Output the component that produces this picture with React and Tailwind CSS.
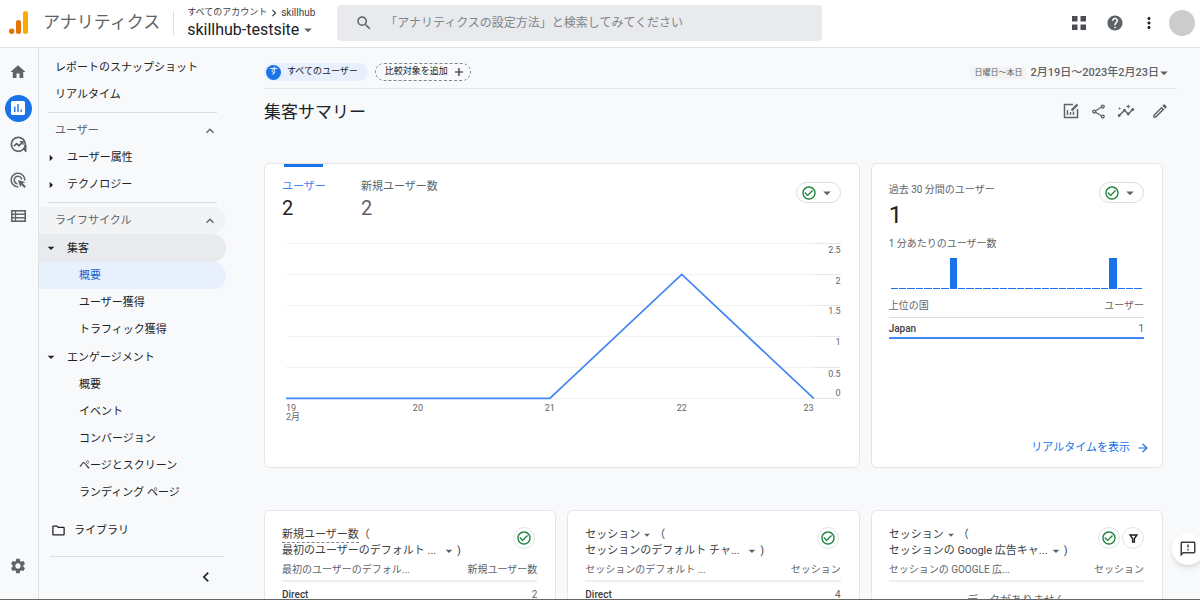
import React from "react";
import {
  MdAdd,
  MdAdsClick,
  MdArrowDropDown,
  MdArrowForward,
  MdArrowRight,
  MdCheckCircleOutline,
  MdChevronLeft,
  MdChevronRight,
  MdExpandLess,
  MdHelp,
  MdHome,
  MdInsights,
  MdMoreVert,
  MdOutlineEdit,
  MdOutlineFeedback,
  MdOutlineFolder,
  MdOutlineShare,
  MdSearch,
  MdSettings,
} from "react-icons/md";

const lifecycle = [
  { label: "集客", open: true, active: true },
  { label: "概要", child: true, selected: true },
  { label: "ユーザー獲得", child: true },
  { label: "トラフィック獲得", child: true },
  { label: "エンゲージメント", open: true },
  { label: "概要", child: true },
  { label: "イベント", child: true },
  { label: "コンバージョン", child: true },
  { label: "ページとスクリーン", child: true },
  { label: "ランディング ページ", child: true },
];

const chartDays = [
  { label: "19", x: 4, y: 163 },
  { label: "20", x: 136, y: 163 },
  { label: "21", x: 268, y: 163 },
  { label: "22", x: 400, y: 39 },
  { label: "23", x: 532, y: 163 },
];

const chartScale = [
  { label: "2.5", line: 8, text: 19 },
  { label: "2", line: 39, text: 50 },
  { label: "1.5", line: 70, text: 80 },
  { label: "1", line: 101, text: 111 },
  { label: "0.5", line: 132, text: 143 },
  { label: "0", line: 163, text: 162 },
];

// users per minute, last 30 minutes
const minutes = Array.from({ length: 30 }, (_, i) => (i === 7 || i === 26 ? 1 : 0));

function AnalyticsLogo() {
  return (
    <svg width="20" height="23" viewBox="0 0 20 23" aria-hidden="true">
      <rect x="14" y="0" width="5" height="23" rx="2.5" fill="#f9ab00" />
      <rect x="7" y="9" width="5" height="14" rx="2.5" fill="#e37400" />
      <circle cx="2.7" cy="20.2" r="2.7" fill="#e37400" />
    </svg>
  );
}

function ReportsIcon() {
  return (
    <svg width="16" height="16" viewBox="0 0 16 16" aria-hidden="true">
      <rect x="1" y="1" width="14" height="14" rx="1.5" fill="#fff" />
      <path d="M4.8 6.5V12M8 4V12M11.2 9.5V12" stroke="#1a73e8" strokeWidth="1.4" />
    </svg>
  );
}

function ExploreIcon() {
  return (
    <svg width="17" height="17" viewBox="0 0 17 17" fill="none" stroke="#5f6368" aria-hidden="true">
      <path d="M13.5 13.5L16 16V9Z" fill="#5f6368" strokeWidth="1" />
      <circle cx="8.3" cy="8.3" r="7" strokeWidth="1.7" />
      <path d="M3.8 10.2L6.7 7.6L9 9.7L12.6 6" strokeWidth="1.7" />
      <path d="M9.8 5.6H13V8.8" strokeWidth="1.4" />
    </svg>
  );
}

function LibraryIcon() {
  return (
    <svg width="15" height="12" viewBox="0 0 15 12" fill="none" stroke="#5f6368" aria-hidden="true">
      <rect x="0.8" y="0.8" width="13.4" height="10.4" strokeWidth="1.6" />
      <path d="M1 4.2H14M1 7.8H14M4.5 1V11" strokeWidth="1.4" />
    </svg>
  );
}

function AppsIcon() {
  return (
    <svg width="14" height="14" viewBox="0 0 14 14" fill="#4a4d51" aria-hidden="true">
      <path d="M0 0H5.5V5.5H0ZM8.5 0H14V5.5H8.5ZM0 8.5H5.5V14H0ZM8.5 8.5H14V14H8.5Z" />
    </svg>
  );
}

function ChartEditIcon() {
  return (
    <svg width="16" height="16" viewBox="0 0 16 16" fill="none" stroke="#5f6368" aria-hidden="true">
      <path d="M10 1.5H1.5V14.5H14.5V6" strokeWidth="1.5" />
      <path d="M4.5 7V12M7.5 9V12M10.5 8.5V12" strokeWidth="1.4" />
      <path d="M8.5 7.5L14.5 1.5" strokeWidth="2.4" />
    </svg>
  );
}

function FilterIcon() {
  return (
    <svg width="9" height="9" viewBox="0 0 9 9" fill="none" stroke="#202124" aria-hidden="true">
      <path d="M1 1H8L5.4 4.6V8H3.6V4.6Z" strokeWidth="1.4" />
    </svg>
  );
}

function Header() {
  return (
    <header className="flex h-12 shrink-0 items-center border-b border-[#dfe1e5] bg-white pr-[5px] pb-0.5 pl-[9px]">
      <AnalyticsLogo />
      <span className="ml-[14px] text-[17px] whitespace-nowrap text-[#5f6368]">アナリティクス</span>
      <div className="ml-[13px] h-6 w-px shrink-0 bg-[#e0e0e0]" />
      <button className="ml-[13px] flex w-[150px] shrink-0 flex-col text-left whitespace-nowrap">
        <span className="flex h-[14px] items-center text-[9px] text-[#3c4043]">
          すべてのアカウント
          <MdChevronRight className="size-[14px]" />
          <span className="text-[10px]">skillhub</span>
        </span>
        <span className="flex h-5 items-center text-base text-[#202124]">
          skillhub-testsite
          <MdArrowDropDown className="size-[18px] text-[#5f6368]" />
        </span>
      </button>
      <label className="flex h-9 w-[485px] items-center rounded bg-[#e8eaed] pl-[18px]">
        <MdSearch className="size-[18px] shrink-0 text-[#5f6368]" />
        <input
          type="search"
          aria-label="検索"
          placeholder="「アナリティクスの設定方法」と検索してみてください"
          className="ml-3 min-w-0 flex-1 bg-transparent text-xs outline-none placeholder:text-[#80868b]"
        />
      </label>
      <div className="ml-auto flex items-center">
        <button aria-label="アプリ" className="flex w-9 justify-center">
          <AppsIcon />
        </button>
        <button aria-label="ヘルプ" className="flex w-9 justify-center text-[#5f6368]">
          <MdHelp className="size-[18px]" />
        </button>
        <button aria-label="その他" className="flex w-8 justify-center text-[#202124]">
          <MdMoreVert className="size-[18px]" />
        </button>
        <button aria-label="アカウント" className="ml-1 size-[26px] rounded-full bg-[#cccccc]" />
      </div>
    </header>
  );
}

function Rail() {
  return (
    <nav className="flex w-[39px] shrink-0 flex-col items-center border-r border-[#dfe1e5] pt-1.5 pr-0.5 pb-[15px] text-[#5f6368]">
      <a href="#home" aria-label="ホーム" className="flex h-9 items-center">
        <MdHome className="size-[18px]" />
      </a>
      <a href="#reports" aria-label="レポート" className="flex h-9 items-center">
        <span className="flex size-[27px] items-center justify-center rounded-full bg-[#1a73e8]">
          <ReportsIcon />
        </span>
      </a>
      <a href="#explore" aria-label="探索" className="flex h-9 items-center">
        <ExploreIcon />
      </a>
      <a href="#ads" aria-label="広告" className="flex h-9 items-center">
        <MdAdsClick className="size-[18px]" />
      </a>
      <a href="#configure" aria-label="設定" className="flex h-9 items-center">
        <LibraryIcon />
      </a>
      <a href="#admin" aria-label="管理" className="mt-auto flex h-9 items-center">
        <MdSettings className="size-[18px]" />
      </a>
    </nav>
  );
}

function SideItem({ item }) {
  if (item.child) {
    return (
      <a
        href="#report"
        className={
          item.selected
            ? "flex h-[27px] items-center rounded-r-full bg-[#e8f0fe] pt-0.5 pl-10 text-[#1967d2]"
            : "flex h-[27px] items-center pt-0.5 pl-10"
        }
      >
        {item.label}
      </a>
    );
  }
  return (
    <button
      className={
        item.active
          ? "flex h-7 w-full items-center rounded-r-full bg-[#e8eaed] pl-1"
          : item.open
            ? "flex h-7 w-full items-center pl-1"
            : "flex h-[27px] w-full items-center pl-1"
      }
    >
      {item.open ? <MdArrowDropDown className="size-4" /> : <MdArrowRight className="size-4" />}
      <span className="ml-2 pt-0.5">{item.label}</span>
    </button>
  );
}

function Sidebar() {
  return (
    <nav className="w-[187px] shrink-0 pt-1.5 text-[11px] whitespace-nowrap text-[#202124]">
      <a href="#snapshot" className="flex h-[27px] items-center pt-0.5 pl-4">
        レポートのスナップショット
      </a>
      <a href="#realtime" className="flex h-[27px] items-center pt-0.5 pl-4">
        リアルタイム
      </a>
      <hr className="my-1 mr-[9px] ml-[9px] border-[#dadce0]" />
      <button className="flex h-[27px] w-full items-center justify-between pr-2 pl-4 text-[#5f6368]">
        <span className="pt-0.5">ユーザー</span>
        <MdExpandLess className="size-4" />
      </button>
      <SideItem item={{ label: "ユーザー属性" }} />
      <SideItem item={{ label: "テクノロジー" }} />
      <hr className="my-1 mr-[9px] ml-[9px] border-[#dadce0]" />
      <button className="flex h-[27px] w-full items-center justify-between rounded-r-full bg-[#f1f3f4] pr-2 pl-4 text-[#5f6368]">
        <span className="pt-0.5">ライフサイクル</span>
        <MdExpandLess className="size-4" />
      </button>
      {lifecycle.map((item, i) => (
        <SideItem key={i} item={item} />
      ))}
      <a href="#library" className="mt-[11px] flex h-[27px] items-center pl-3">
        <MdOutlineFolder className="size-[15px]" />
        <span className="ml-2 pt-0.5">ライブラリ</span>
      </a>
      <hr className="mt-3 mr-[2px] ml-[11px] border-[#dadce0]" />
      <button aria-label="閉じる" className="mt-2.5 ml-auto flex w-10 justify-center">
        <MdChevronLeft className="size-5" />
      </button>
    </nav>
  );
}

function StatusPill() {
  return (
    <button
      aria-label="データの状態"
      className="flex h-[21px] w-[45px] items-center justify-between rounded-full border border-[#dadce0] pr-1 pl-1"
    >
      <MdCheckCircleOutline className="size-4 text-[#188038]" />
      <MdArrowDropDown className="size-[18px] text-[#5f6368]" />
    </button>
  );
}

function RoundButton({ label, children }) {
  return (
    <button
      aria-label={label}
      className="flex size-[22px] items-center justify-center rounded-full border border-[#e3e5e8]"
    >
      {children}
    </button>
  );
}

function UsersChart() {
  return (
    <svg viewBox="0 0 559 190" className="block w-full text-[9px]" fill="#5f6368" role="img" aria-label="ユーザー">
      {chartScale.map((row) => (
        <g key={row.label}>
          <path d={`M4 ${row.line + 0.5}H559`} stroke="#f0f1f2" />
          <path d={`M532 ${row.line + 0.5}H559`} stroke="#e4e6e8" />
          <text x="559" y={row.text - 1} textAnchor="end">
            {row.label}
          </text>
        </g>
      ))}
      <polyline
        points={chartDays.map((d) => `${d.x},${d.y + 0.5}`).join(" ")}
        fill="none"
        stroke="#4285f4"
        strokeWidth="1.7"
      />
      {chartDays.map((d, i) => (
        <text
          key={d.label}
          x={d.x}
          y="176"
          textAnchor={i === 0 ? "start" : i === chartDays.length - 1 ? "end" : "middle"}
        >
          {d.label}
        </text>
      ))}
      <text x="4" y="185">
        2月
      </text>
    </svg>
  );
}

function UsersCard() {
  return (
    <section className="col-span-2 h-[305px] rounded-md border border-[#e3e5e8] bg-white pr-[18px] pl-[17px]">
      <div className="flex items-start">
        <button className="flex w-[79px] flex-col items-start text-left">
          <span className="ml-0.5 h-[3px] w-[39px] bg-[#1a73e8]" />
          <span className="mt-[11px] text-[11px] leading-[18px] text-[#4285f4]">ユーザー</span>
          <span className="text-xl leading-6 text-[#202124]">2</span>
        </button>
        <button className="flex flex-col items-start pt-[14px] text-left text-[#5f6368]">
          <span className="text-[11px] leading-[18px]">新規ユーザー数</span>
          <span className="text-xl leading-6">2</span>
        </button>
        <div className="mt-[18px] ml-auto">
          <StatusPill />
        </div>
      </div>
      <div className="mt-[15px]">
        <UsersChart />
      </div>
    </section>
  );
}

function RealtimeCard() {
  return (
    <section className="flex h-[305px] flex-col rounded-md border border-[#e3e5e8] bg-white pr-[18px] pl-[17px] text-[10px] text-[#5f6368]">
      <div className="flex items-start justify-between pt-[18px]">
        <div>
          <h2 className="leading-4">過去 30 分間のユーザー</h2>
          <p className="mt-[3px] text-2xl leading-7 text-[#202124]">1</p>
        </div>
        <StatusPill />
      </div>
      <p className="mt-[7px] leading-4">1 分あたりのユーザー数</p>
      <div className="mt-1.5 flex h-[31px] items-end gap-px px-0.5">
        {minutes.map((n, i) => (
          <div key={i} className={n ? "h-[31px] flex-1 bg-[#1a73e8]" : "h-px flex-1 bg-[#1a73e8]"} />
        ))}
      </div>
      <table className="mt-1.5 w-full">
        <thead>
          <tr className="border-b border-[#dadce0]">
            <th className="h-[22px] text-left font-normal">上位の国</th>
            <th className="text-right font-normal">ユーザー</th>
          </tr>
        </thead>
        <tbody>
          <tr className="border-b-2 border-[#4285f4]">
            <td className="h-[21px] pt-0.5 font-medium text-[#3c4043]">Japan</td>
            <td className="pt-0.5 text-right">1</td>
          </tr>
        </tbody>
      </table>
      <a
        href="#realtime"
        className="mt-auto mb-[11px] -mr-1.5 flex items-center justify-end text-[11px] leading-4 text-[#1a73e8]"
      >
        リアルタイムを表示
        <MdArrowForward className="ml-1.5 size-[14px]" />
      </a>
    </section>
  );
}

function SummaryCard({ metric, dimension, column, metricColumn, row, underlined, filter }) {
  return (
    <section className="h-[200px] rounded-md border border-[#e3e5e8] bg-white pt-4 pr-[18px] pl-[17px] text-[#5f6368]">
      <div className="flex items-start">
        <h2 className="min-w-0 text-[11px] leading-4 whitespace-nowrap text-[#3c4043]">
          <span className="flex h-4 items-center">
            <span className={underlined ? "border-b border-dashed border-[#80868b] leading-[15px]" : ""}>{metric}</span>
            {!underlined && <MdArrowDropDown className="size-[14px] text-[#5f6368]" />}
            <span>（</span>
          </span>
          <span className="flex h-4 items-center">
            <span className="w-[159px] truncate">{dimension}</span>
            <MdArrowDropDown className="size-4 shrink-0 text-[#5f6368]" />
            <span>)</span>
          </span>
        </h2>
        <div className={filter ? "ml-auto flex gap-0.5" : "mr-0.5 ml-auto flex"}>
          <RoundButton label="データの状態">
            <MdCheckCircleOutline className="size-4 text-[#188038]" />
          </RoundButton>
          {filter && (
            <RoundButton label="フィルタ">
              <FilterIcon />
            </RoundButton>
          )}
        </div>
      </div>
      <table className="w-full text-[10px]">
        <thead>
          <tr className="border-b-2 border-[#eeeeee]">
            <th className="h-[22px] text-left font-normal">{column}</th>
            <th className="text-right font-normal">{metricColumn}</th>
          </tr>
        </thead>
        <tbody>
          {row ? (
            <tr>
              <td className="h-[25px] font-medium text-[#3c4043]">{row[0]}</td>
              <td className="text-right">{row[1]}</td>
            </tr>
          ) : (
            <tr>
              <td colSpan={2} className="h-10 text-center text-[11px]">
                データがありません
              </td>
            </tr>
          )}
        </tbody>
      </table>
    </section>
  );
}

function App() {
  return (
    <div className="relative flex h-screen flex-col overflow-hidden border-b border-[#666666] bg-[#f8f9fb] font-[Roboto,'Noto_Sans_CJK_JP',sans-serif]">
      <Header />
      <div className="flex min-h-0 flex-1">
        <Rail />
        <Sidebar />
        <main className="min-w-0 flex-1 overflow-hidden pr-[23px] pl-[38px]">
          <div className="flex h-[41px] items-center border-b border-[#e3e5e8] pt-2">
            <button className="flex h-[18px] items-center rounded-full bg-[#e8f0fe] pr-2.5 pl-0.5 text-[9px] text-[#202124]">
              <span className="flex size-[15px] items-center justify-center rounded-full bg-[#1a73e8] text-white">
                す
              </span>
              <span className="ml-1.5">すべてのユーザー</span>
            </button>
            <button className="ml-[7px] flex h-[18px] items-center rounded-full border border-dashed border-[#80868b] pr-1 pl-[9px] text-[9px] text-[#202124]">
              比較対象を追加
              <MdAdd className="ml-1 size-[14px]" />
            </button>
            <button className="mt-0.5 mr-1 ml-auto flex items-center text-[#5f6368]">
              <span className="bg-[#f1f3f4] px-1 text-[8px] leading-3">日曜日〜本日</span>
              <span className="ml-1 text-[11px] font-medium">2月19日〜2023年2月23日</span>
              <MdArrowDropDown className="-ml-1 size-[18px]" />
            </button>
          </div>
          <div className="flex h-[46px] items-center justify-between">
            <h1 className="pt-0.5 text-[17px] text-[#202124]">集客サマリー</h1>
            <div className="flex items-center pr-2 pb-0.5 text-[#5f6368]">
              <button aria-label="レポートをカスタマイズ">
                <ChartEditIcon />
              </button>
              <button aria-label="共有" className="ml-[11px]">
                <MdOutlineShare className="size-[17px]" />
              </button>
              <button aria-label="インサイト" className="ml-2.5">
                <MdInsights className="size-[18px]" />
              </button>
              <button aria-label="編集" className="ml-4">
                <MdOutlineEdit className="size-[18px]" />
              </button>
            </div>
          </div>
          <div className="mt-7 mr-[14px] grid grid-cols-3 gap-x-[11px] gap-y-[42px]">
            <UsersCard />
            <RealtimeCard />
            <SummaryCard
              metric="新規ユーザー数"
              dimension="最初のユーザーのデフォルト ..."
              column="最初のユーザーのデフォル..."
              metricColumn="新規ユーザー数"
              row={["Direct", 2]}
              underlined
            />
            <SummaryCard
              metric="セッション"
              dimension="セッションのデフォルト チャ..."
              column="セッションのデフォルト ..."
              metricColumn="セッション"
              row={["Direct", 4]}
            />
            <SummaryCard
              metric="セッション"
              dimension="セッションの Google 広告キャ..."
              column="セッションの GOOGLE 広..."
              metricColumn="セッション"
              filter
            />
          </div>
        </main>
      </div>
      <button
        aria-label="フィードバック"
        className="absolute right-[-4px] bottom-[34px] flex size-8 items-center justify-center rounded-full bg-white text-[#3c4043] shadow-md"
      >
        <MdOutlineFeedback className="size-[18px]" />
      </button>
    </div>
  );
}

export default App;
